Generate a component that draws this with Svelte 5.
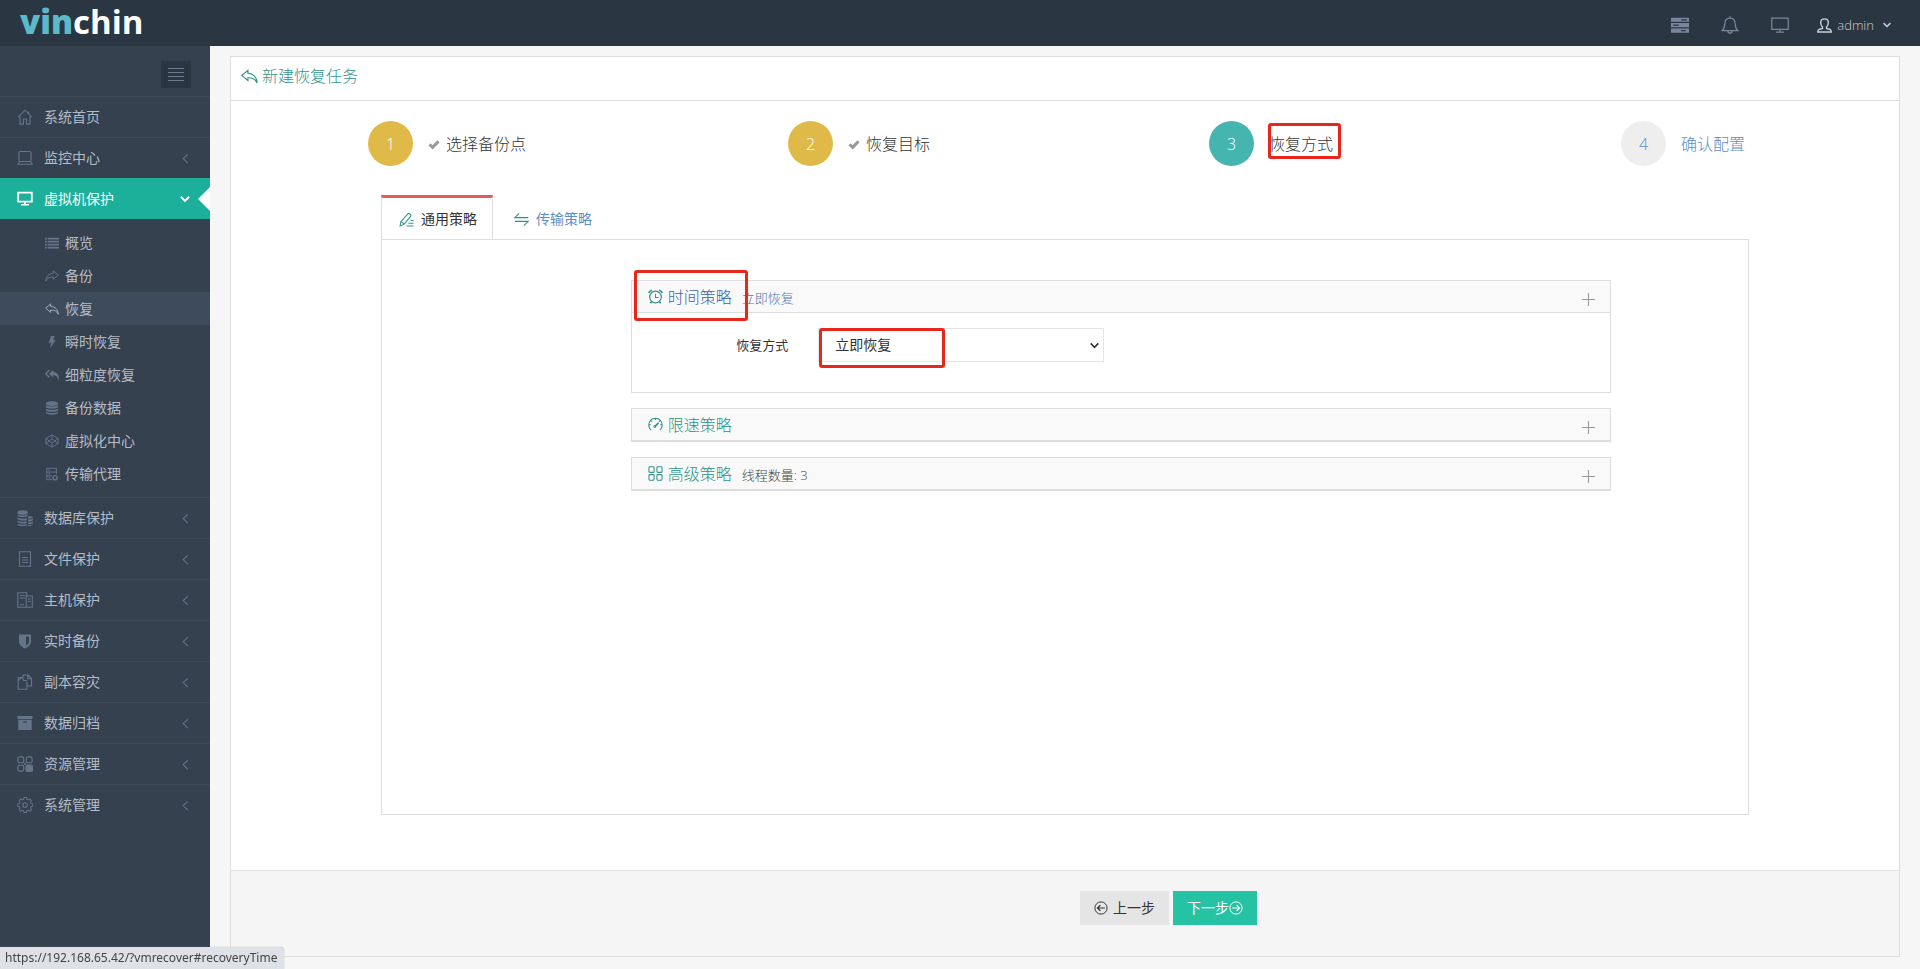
<script>
  const icons = {
    home: '<path d="M1 8.2 8 1.2l7 7M3 7.5v7.6h3.4V10h3.2v5.1H13V7.5"/><path d="M11.6 4.8V2.4"/>',
    laptop: '<rect x="2" y="1.5" width="12" height="10" rx="1.2"/><path d="M2.6 11.5.8 14.2h14.4l-1.8-2.7"/>',
    desktop: '<path d="M1.2 1.7h13.6v9H1.2z" stroke-width="1.8"/><path d="M7 10.5h2v3H7zM4 13h8v1.6H4z" fill="currentColor" stroke="none"/>',
    list: '<path d="M0 3h2M3 3h13M0 6.400h2M3 6.400h13M0 9.800h2M3 9.800h13M0 13.200h2M3 13.200h13" stroke-width="2"/>',
    share: '<path d="M9.500 2.200 15.300 7l-5.800 4.800V9.200C5 9 2.500 10.500.8 14c.2-5 3.500-8.800 8.700-9.100z"/>',
    reply: '<path d="M6.500 2.200.7 7l5.800 4.800V9.200c4.500-.2 7 1.300 8.700 4.800-.2-5-3.500-8.800-8.700-9.100z"/>',
    bolt: '<path d="M7 1h4L9.300 5.600H12L6 15.500l1.200-6.700H4.200z" fill="currentColor" stroke="none"/>',
    replyall: '<path d="M9.300 2.200 4.600 6.500l4.700 4.300V8.400c3.500 0 5.200 1.700 6.100 6 1.400-6-1-9.700-6.100-9.900z" fill="currentColor" stroke="none"/><path d="M5 2.300.8 6.500 5 10.700" stroke-width="1.600"/>',
    database: '<g fill="currentColor" stroke="none"><ellipse cx="8" cy="3" rx="7" ry="2.600"/><path d="M1 4.700c1.500 2 12.500 2 14 0v2.200c-1.500 2.300-12.500 2.300-14 0zM1 8.500c1.500 2 12.500 2 14 0v2.200c-1.500 2.300-12.500 2.300-14 0zM1 12.200c1.500 2 12.500 2 14 0v1.500c-1.500 2.500-12.500 2.500-14 0z"/></g>',
    hex: '<path d="M8 1l7 4v6l-7 4-7-4V5zM1 5l7 5.500L15 5M1 11l7-5.500 7 5.500M8 1v4.500M8 10.500V15"/>',
    agent: '<path d="M13 8V1.500H2v13h6M2 5.800h11M2 10.200h6M4 3.600h2M4 8h2M4 12.400h2"/><circle cx="11.500" cy="12.300" r="2.400" stroke-width="1.600"/>',
    databases: '<g fill="currentColor" stroke="none"><ellipse cx="5.600" cy="2.500" rx="5.200" ry="2.300"/><path d="M.4 4c1 2 9.400 2 10.400 0v1.600c-1 2.200-9.400 2.200-10.400 0zM.4 7.100c1 2 7.500 2 9.300.9v1.900c-2 .9-8.300.9-9.300-1.200zM.4 10.200c1 2 7.500 2 9.300.9V13c-2 .9-8.300.9-9.300-1.200zM.4 13.200c1 1.600 7 1.800 9.300 1v1.500c-3 .5-8.300.3-9.300-1.300zM11 6.400c2-.3 4.500 0 5 .8-.5 1.200-3 1.500-5 1.300zM11 9.400c2 .1 4.300-.2 5-1v1.900c-.7 1-3 1.300-5 1.200zM11 12.400c2 .1 4.300-.2 5-1v1.700c-.7 1-3 1.200-5 1.100zM11 15.100c2 .1 4.300-.2 5-.9-.2 1.400-2.700 1.900-5 1.700z"/></g>',
    file: '<path d="M2.500.8h11v14.400h-11zM5 6.500h6M5 9h6M5 11.500h6"/>',
    host: '<path d="M9 15.300H.8V.8h8.900V4M9.300 4h6v11.300h-6zM3 3.500h5M3 6h5M3 12.800h4M11 7h2.500M11 9.500h2.500"/>',
    shield: '<path d="M2 1.500h12v6.700c0 3.300-2.600 5.700-6 7.300-3.400-1.600-6-4-6-7.300z" fill="currentColor" stroke="none"/><path d="M9 3.500h3v5c0 1.600-1.200 2.800-3 4z" fill="#364150" stroke="none"/>',
    copy: '<path d="M6 3.500H1.200v11.700h8.600V7.500M9.500 12h5V4.500L11 1H6v5.200M1.200 6.800 4.500 3.500M10.700 1v3.800h3.800M6 6.500h3.800"/>',
    archive: '<path d="M.5 1h15v3H.5zM1.300 4.800h13.400V15H1.300z" fill="currentColor" stroke="none"/><path d="M6 7h4" stroke="#364150"/>',
    modules: '<rect x=".9" y=".9" width="5.800" height="5.800" rx="1.500"/><rect x="9.300" y=".9" width="5.800" height="5.800" rx="1.500"/><rect x=".9" y="9.300" width="5.800" height="5.800" rx="1.500"/><rect x="9" y="9" width="6.500" height="6.500" rx="1.500" fill="currentColor"/><path d="M6.700 8h2.600M8 6.700v2.600"/>',
    grid: '<rect x="1" y=".9" width="5.500" height="5.900" rx="1"/><rect x="9.500" y=".9" width="5.500" height="5.900" rx="1"/><rect x="1" y="9.200" width="5.500" height="5.900" rx="1"/><rect x="9.500" y="9.200" width="5.500" height="5.900" rx="1"/>',
    gear: '<circle cx="8" cy="8" r="2.300"/><path d="M6.700.8h2.600l.5 2.100 1.300.6 1.900-1.200 1.800 1.800-1.200 1.900.5 1.200 2.200.5v2.600l-2.200.5-.5 1.200 1.200 1.900-1.800 1.800-1.900-1.200-1.300.6-.5 2.100H6.700l-.5-2.100-1.300-.6L3 15.700l-1.800-1.800L2.400 12l-.5-1.200-2.100-.5V7.700l2.100-.5L2.400 6 1.200 4.100 3 2.300l1.900 1.200 1.300-.6z" transform="translate(.9 -.2) scale(.92)"/>',
    server: '<path d="M0 1.500h16v3.700H0zM0 6.300h16V10H0zM0 11.100h16v3.700H0z" fill="currentColor" stroke="none"/><path d="M9 3.400h5M2 8.200h5M9 13h4" stroke="#2b3643"/>',
    bell: '<path d="M1 13h14c-1.500-1.300-2.200-2.600-2.400-6C12.500 3.500 10.800 1.800 8 1.800S3.500 3.500 3.400 7C3.200 10.400 2.500 11.700 1 13zM8 1.800V.3M6 13.200c.3 2.700 3.700 2.700 4 0"/>',
    monitor: '<path d="M.7 1.800h14.600v10H.7zM8 12v2M4.500 14.300h7"/>',
    user: '<path d="M5.800 9.500C4.200 8 3.900 6.500 3.900 4.800 3.900 2.300 5.500.9 8 .9s4.100 1.400 4.100 3.900c0 1.700-.3 3.200-1.900 4.700v1.700l3.800 1.100c.9.400 1.200 1 1.200 2.600H.8c0-1.600.3-2.200 1.200-2.600l3.800-1.100z" stroke-width="1.500"/>',
    check: '<path d="M2 8.500 6.200 12.500 14 4.500" stroke-width="4"/>',
    pencil: '<path d="M1.200 14.800l.8-4.400L9.600 1.700c.9-.9 3.900 1.600 3 2.700L5.200 13.200zM2 10.400c1.800.2 2.800 1.200 3.200 2.800M8 15h7.500M10 12h5.500M12.500 9h3"/>',
    swap: '<path d="M5.500 1.500.8 6h14.400M10.500 14.500l4.700-4.500H.8"/>',
    clock: '<circle cx="8" cy="8.500" r="6.200" stroke-width="1.300"/><path d="M8 5v4h3.300"/><path d="M.8 4.300C1.300 2.800 2.500 1.700 4.300 1.300M15.200 4.300c-.5-1.500-1.700-2.600-3.500-3M3.800 13.500l-1.300 1.800M12.200 13.500l1.300 1.800" stroke-width="1.800"/>',
    gauge: '<path d="M3.300 14A7.200 7.200 0 1 1 12.700 14M8 1.500V3.300M1.200 8.300H3M13 8.300h1.800M3.200 3.600l1.300 1.200M12.800 3.600l-1.300 1.200" stroke-width="1.200"/><path d="M7.500 10 11.300 6.300" stroke-width="1.700"/><circle cx="7.200" cy="10.200" r=".9"/>',
    prev: '<circle cx="8" cy="8" r="7"/><path d="M12.500 8H4M7.300 4.700 4 8l3.300 3.300" stroke-width="1.400"/>',
    next: '<circle cx="8" cy="8" r="7"/><path d="M3.500 8H12M8.700 4.700 12 8l-3.300 3.300" stroke-width="1.400"/>',
    left: '<path d="M10.500 3.500 5.500 8l5 5" />',
    down: '<path d="M2.500 5 8 10.500 13.500 5" stroke-width="2.400"/>',
    plus: '<path d="M7.500 1v13M1 7.500h13"/>',
  };

  const top = [
    { icon: 'home', label: '系统首页', leaf: true },
    { icon: 'laptop', label: '监控中心' },
  ];
  const sub = [
    ['list', '概览'], ['share', '备份'], ['reply', '恢复'], ['bolt', '瞬时恢复'],
    ['replyall', '细粒度恢复'], ['database', '备份数据'], ['hex', '虚拟化中心'], ['agent', '传输代理'],
  ];
  const rest = [
    ['databases', '数据库保护'], ['file', '文件保护'], ['host', '主机保护'], ['shield', '实时备份'],
    ['copy', '副本容灾'], ['archive', '数据归档'], ['modules', '资源管理'], ['gear', '系统管理'],
  ].map(([icon, label]) => ({ icon, label }));
  const steps = [
    { label: '选择备份点', state: 'done' },
    { label: '恢复目标', state: 'done' },
    { label: '恢复方式', state: 'current' },
    { label: '确认配置', state: 'todo' },
  ];
</script>

{#snippet icon(name, size = 16)}
  <svg class="icon" width={size} height={size} viewBox="0 0 16 16" fill="none" stroke="currentColor" stroke-width="1.1" aria-hidden="true">{@html icons[name]}</svg>
{/snippet}

{#snippet navItem(item)}
  <li class="item">
    <a href="#menu">
      {@render icon(item.icon)}<span>{item.label}</span>
      {#if !item.leaf}<i class="chev">{@render icon('left', 15)}</i>{/if}
    </a>
  </li>
{/snippet}

<div class="page">
  <header>
    <a class="logo" href="#home"><b>vin</b>chin</a>
    <div class="tools">
      <button aria-label="任务">{@render icon('server', 18)}</button>
      <button aria-label="通知">{@render icon('bell', 18)}</button>
      <button aria-label="监视">{@render icon('monitor', 18)}</button>
      <button class="user">{@render icon('user', 15)}<span>admin</span>{@render icon('down', 10)}</button>
    </div>
  </header>

  <div class="layout">
    <nav>
      <div class="toggle-row">
        <button class="toggle" aria-label="折叠菜单"><i></i><i></i><i></i><i></i></button>
      </div>
      <ul>
        {#each top as item}{@render navItem(item)}{/each}
        <li class="item open">
          <a href="#vm">
            {@render icon('desktop')}<span>虚拟机保护</span>
            <i class="chev">{@render icon('down', 12)}</i>
          </a>
          <ul class="sub">
            {#each sub as [name, label]}
              <li><a href="#sub" class:active={name === 'reply'}>{@render icon(name, 14)}<span>{label}</span></a></li>
            {/each}
          </ul>
        </li>
        {#each rest as item}{@render navItem(item)}{/each}
      </ul>
    </nav>

    <main>
      <section class="panel">
        <h1>{@render icon('reply', 17)}<span>新建恢复任务</span></h1>

        <ol class="steps">
          {#each steps as step, i}
            <li class={step.state}>
              <span class="num">{i + 1}</span>
              {#if step.state === 'done'}<span class="tick">{@render icon('check', 12)}</span>{/if}
              <span class="name">{step.label}{#if step.state === 'current'}<i class="mark mark-step"></i>{/if}</span>
            </li>
          {/each}
        </ol>

        <div class="tabs">
          <div class="tablist">
            <button class="tab on">{@render icon('pencil', 15)}<span>通用策略</span></button>
            <button class="tab">{@render icon('swap', 15)}<span>传输策略</span></button>
          </div>
          <div class="content">
            <div class="groups">
              <div class="group expanded">
                <div class="head link">
                  {@render icon('clock', 15)}<a href="#recoveryTime">时间策略</a><small>立即恢复</small>
                  <button aria-label="展开时间策略">{@render icon('plus', 16)}</button>
                  <i class="mark mark-head"></i>
                </div>
                <div class="body">
                  <label for="mode">恢复方式</label>
                  <div class="field">
                    <select id="mode"><option>立即恢复</option></select>
                    <span class="caret">{@render icon('down', 11)}</span>
                    <i class="mark mark-field"></i>
                  </div>
                </div>
              </div>
              <div class="group">
                <div class="head">
                  {@render icon('gauge', 15)}<a href="#speed">限速策略</a>
                  <button aria-label="展开限速策略">{@render icon('plus', 16)}</button>
                </div>
              </div>
              <div class="group">
                <div class="head">
                  {@render icon('grid', 15)}<a href="#advanced">高级策略</a><small>线程数量: 3</small>
                  <button aria-label="展开高级策略">{@render icon('plus', 16)}</button>
                </div>
              </div>
            </div>
          </div>
        </div>

        <footer>
          <button class="prev">{@render icon('prev', 14)}<span>上一步</span></button>
          <button class="next"><span>下一步</span>{@render icon('next', 14)}</button>
        </footer>
      </section>
    </main>
  </div>

  <div class="status">https://192.168.65.42/?vmrecover#recoveryTime</div>
</div>

<style>
  :global(body) { margin: 0; }
  .page {
    display: flex; flex-direction: column; min-height: 100vh; box-sizing: border-box;
    font: 14px/20px "Open Sans", "Noto Sans CJK SC", sans-serif; color: #333; background: #f6f6f6;
  }
  .page * { box-sizing: border-box; }
  a { color: inherit; text-decoration: none; }
  ul, ol { list-style: none; margin: 0; padding: 0; }
  button { font: inherit; color: inherit; background: none; border: 0; padding: 0; cursor: pointer; }
  .icon { display: block; flex: none; }

  header {
    display: flex; justify-content: space-between; height: 46px; flex: none;
    padding: 0 28px 0 20px; background: #2b3643;
  }
  .logo { font: 700 33px/36px "Open Sans", sans-serif; color: #fff; padding-top: 4px; }
  .logo b { color: #5bbac7; }
  .tools { display: flex; align-items: center; gap: 32px; color: #79869a; padding-top: 4px; }
  .user { display: flex; align-items: center; gap: 5px; color: #c6cfda; font-size: 13px; font-weight: 300; margin-left: -4px; }
  .user span { margin-right: 3px; }

  .layout { display: flex; flex: 1; }
  nav { width: 210px; flex: none; background: #364150; color: #b4bcc8; }
  .toggle-row { display: flex; justify-content: flex-end; padding: 15px 19px 8px; }
  .toggle {
    width: 30px; height: 27px; background: #2b3643; display: flex; flex-direction: column;
    justify-content: center; align-items: center; gap: 3px;
  }
  .toggle i { width: 16px; height: 1px; background: #6c7a8c; }
  .item > a {
    display: flex; align-items: center; height: 41px; padding: 0 17px;
    border-top: 1px solid #3d4957;
  }
  .item > a > .icon { color: #66748a; margin-right: 11px; }
  .chev { margin-left: auto; color: #66748a; }
  .open > a { background: #1caf9a; color: #fff; position: relative; padding-right: 19px; border-color: #1caf9a; }
  .open > a > .icon, .open .chev { color: #fff; }
  .open > a::after {
    content: ""; position: absolute; right: 0; top: 8px;
    border: 12px solid transparent; border-left: 0; border-right-color: #fff;
  }
  .sub { padding: 7px 0; }
  .sub a { display: flex; align-items: center; gap: 6px; height: 33px; padding-left: 45px; }
  .sub .icon { color: #66748a; }
  .sub .active { background: #3e4b5c; }
  .sub .active .icon { color: #a7b1bf; }

  main { flex: 1; display: flex; padding: 10px 20px 12px; min-width: 0; }
  .panel { flex: 1; display: flex; flex-direction: column; background: #fff; border: 1px solid #ddd; min-width: 0; }
  h1 {
    display: flex; align-items: center; gap: 4px; margin: 0; height: 44px; padding: 0 10px 5px;
    border-bottom: 1px solid #ddd; font-size: 16px; font-weight: 300; color: #2f9388;
  }
  .steps { display: grid; grid-template-columns: repeat(4, 1fr); padding: 20px 10px 29px; }
  .steps li { display: flex; align-items: center; justify-content: center; font-size: 16px; font-weight: 300; }
  .num {
    width: 45px; height: 45px; border-radius: 50%; background: #dfba49; color: #fff;
    display: flex; align-items: center; justify-content: center; margin-right: 15px;
  }
  .tick { color: #999; margin-right: 6px; }
  .name { position: relative; }
  .current .num { background: #45b6af; }
  .todo .num { background: #eee; }
  .todo, .todo .num { color: #5b8fc7; }
  .mark { position: absolute; border: 3px solid #e8261b; border-radius: 3px; pointer-events: none; }
  .mark-step { inset: -11px -8px -5px -1px; }

  .tabs { flex: 1; display: flex; flex-direction: column; margin: 0 9% 55px; }
  .tablist { display: flex; gap: 3px; }
  .tab {
    display: flex; align-items: center; gap: 7px; height: 44px; padding: 1px 15px 0 17px;
    border: solid transparent; border-width: 3px 1px 0; color: #5b8fc7;
  }
  .tab.on { border-color: #e35b5a #ddd; color: #333; background: #fff; margin-bottom: -1px; position: relative; }
  .tab .icon, .head .icon { color: #2f9388; }
  .content { flex: 1; border: 1px solid #ddd; padding-top: 40px; }
  .groups { margin: 0 10% 0 18.2%; display: flex; flex-direction: column; gap: 15px; }
  .group { border: 1px solid #ddd; border-bottom-width: 2px; }
  .group.expanded { border-bottom-width: 1px; }
  .head {
    position: relative; display: flex; align-items: center; height: 31px; padding: 0 13px 0 16px;
    background: #f9f9f9; color: #2f9388; font-size: 16px; font-weight: 300;
  }
  .head a { margin: 0 10px 0 5px; }
  .head small { font-size: 13px; color: #444; padding-top: 2px; }
  .link a { color: #3f659f; }
  .link small { color: #5577ad; }
  .head button { margin-left: auto; padding-top: 6px; }
  .head button .icon { color: #999; }
  .mark-head { left: 2px; top: -11px; width: 114px; height: 51px; }
  .body { display: flex; align-items: flex-start; border-top: 1px solid #ddd; padding: 15px 0 30px; }
  label { width: 16%; text-align: right; font-size: 13px; line-height: 34px; }
  .field { position: relative; width: 29.2%; margin-left: 30px; }
  select {
    appearance: none; display: block; width: 100%; height: 34px; padding: 0 16px; border: 1px solid #e5e5e5;
    border-radius: 0; background: #fff; color: #333; font: inherit;
  }
  .caret { position: absolute; right: 4px; top: 12px; pointer-events: none; }
  .mark-field { left: 1px; top: 0; width: 126px; height: 40px; }

  footer {
    display: flex; gap: 4px; background: #f5f5f5; border-top: 1px solid #e5e5e5; padding: 20px 0 31px 50.9%;
  }
  footer button { display: flex; align-items: center; height: 34px; padding: 0 14px; }
  .prev { background: #e5e5e5; gap: 5px; }
  .next { background: #26c2a4; color: #fff; }

  .status {
    position: fixed; left: 0; bottom: 0; height: 22px; padding: 0 7px 0 5px; background: #dee1e6;
    border-top-right-radius: 4px; box-shadow: 0 0 1px #888; font: 12px/22px "Noto Sans", sans-serif; color: #444;
  }
</style>
